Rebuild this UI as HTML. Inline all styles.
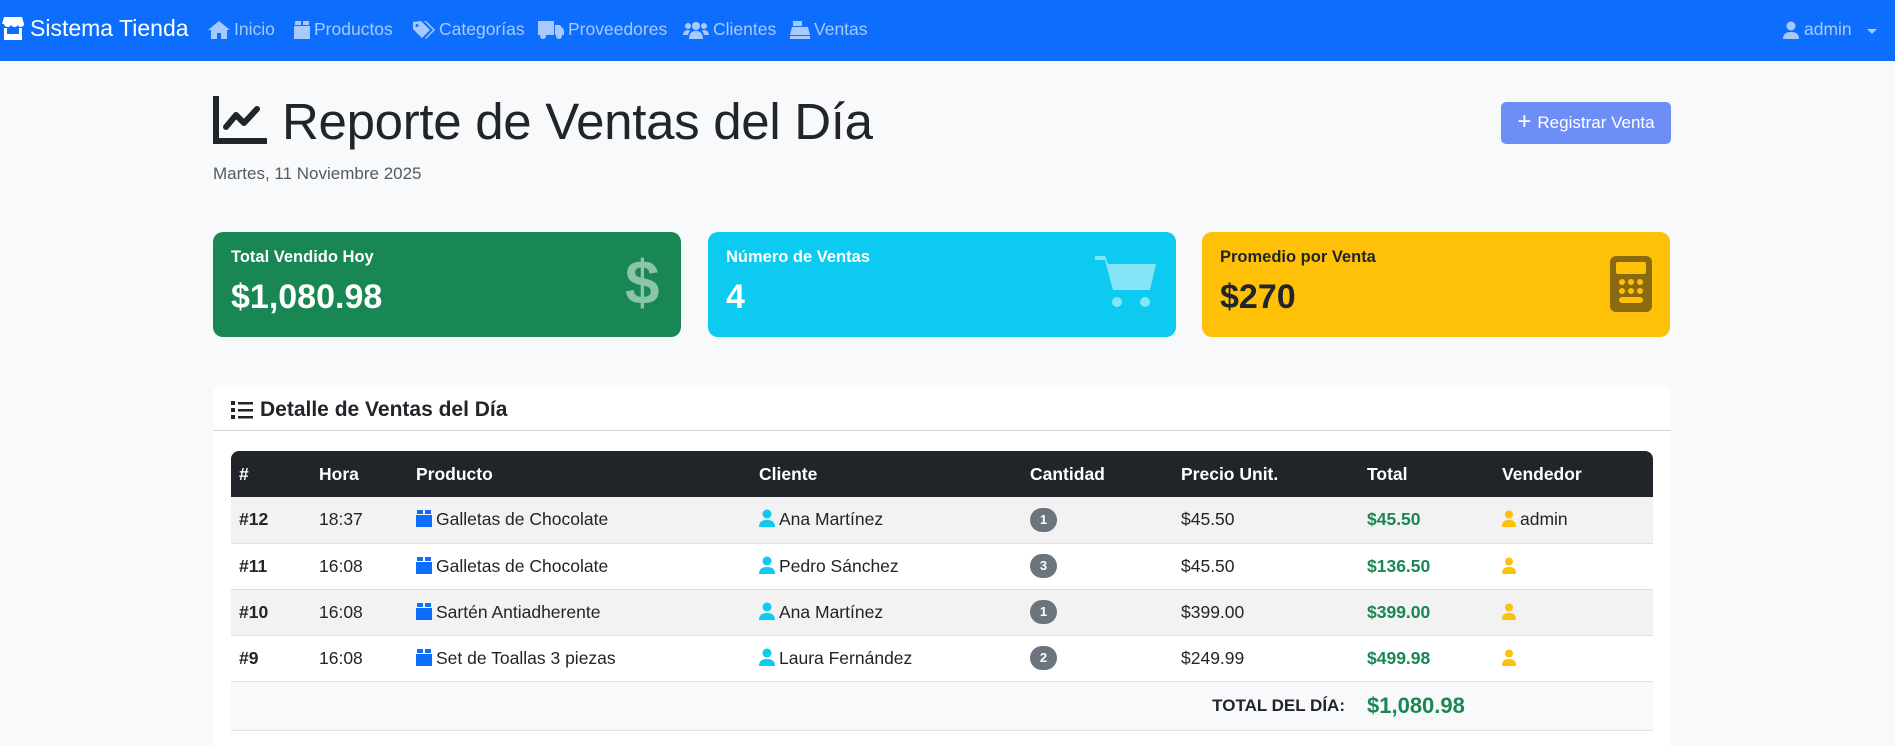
<!DOCTYPE html>
<html><head><meta charset="utf-8">
<style>
*{box-sizing:border-box;margin:0;padding:0}
body{width:1895px;height:746px;overflow:hidden;background:#f8f9fa;font-family:"Liberation Sans",sans-serif;color:#212529;position:relative}
.nav{position:absolute;left:0;top:0;width:1895px;height:61px;background:#0d6efd}
.abs{position:absolute}
.brand{left:30px;top:15px;font-size:23px;color:#fff}
.ni{top:19px;font-size:17.5px;color:#a8c9fe;display:flex;align-items:center;gap:4px}
.ni svg{fill:#a8c9fe}
.title{left:282px;top:92px;font-size:51px;font-weight:300;color:#212529;letter-spacing:-0.3px}
.date{left:213px;top:164px;font-size:17px;color:#555b61}
.btn{left:1501px;top:102px;width:170px;height:42px;background:#6e8ef7;border-radius:5px;color:#fff;font-size:17px;display:flex;align-items:center;justify-content:center;gap:6px}
.card{top:232px;height:105px;width:468px;border-radius:10px}
.card .t{position:absolute;left:18px;top:16px;font-size:16.5px;font-weight:bold}
.card .v{position:absolute;left:18px;top:46px;font-size:34px;font-weight:bold}
.card svg{position:absolute}
.panel{left:213px;top:387px;width:1458px;height:359px;background:#fff;border-radius:6px 6px 0 0}
.ph{position:absolute;left:0;top:0;width:100%;height:44px;border-bottom:1px solid #d3d6d9;font-size:21px;font-weight:bold;padding:11px 0 0 47px}
table{position:absolute;left:231px;top:451px;width:1422px;border-collapse:collapse;font-size:17.5px}
th{background:#212529;color:#fff;height:46px;text-align:left;font-weight:bold;padding:0 0 0 8px}
th:first-child{border-top-left-radius:8px}th:last-child{border-top-right-radius:8px}
td{height:46px;border-bottom:1px solid #dee2e6;padding:0 0 0 8px;vertical-align:middle}
tbody tr:nth-child(odd) td{background:#f2f2f2}
tfoot td{background:#f8f9fa;height:49px}
.g{color:#198754;font-weight:bold}
.b{display:inline-block;width:27px;height:24px;border-radius:12px;background:#6c757d;color:#fff;font-size:13px;font-weight:bold;text-align:center;line-height:24px}
.ic{vertical-align:-2px;margin-right:4px}
</style></head><body>
<div class="nav"></div>
<svg class="abs" style="left:2px;top:16px" width="22" height="26" viewBox="0 0 22 26"><path d="M2 1h18l2 7c0 2-2 3-3.5 3S16 10 16 8c0 2-2 3-3.5 3S9 10 9 8c0 2-1.5 3-3 3S2 10 2 8L0 8z" fill="#fff"/><path d="M2 12h3v6h12v-6h3v12H2z" fill="#fff"/></svg>
<div class="abs brand">Sistema Tienda</div>
<div class="abs ni" style="left:208px"><svg width="22" height="18" viewBox="0 0 22 18"><path d="M11 0L0 9h3v9h6v-6h4v6h6V9h3z"/></svg>Inicio</div>
<div class="abs ni" style="left:294px"><svg width="16" height="18" viewBox="0 0 16 18"><path d="M0 5h16v13H0zM1 0h6v4H1zM9 0h6v4H9z"/></svg>Productos</div>
<div class="abs ni" style="left:413px"><svg width="22" height="18" viewBox="0 0 22 18"><path d="M0 1v7l9 9 8-8-9-9zM4 3a1.5 1.5 0 110 3 1.5 1.5 0 010-3zM11 0l9 9-8 8 1 1 9-9-9-9z"/></svg>Categorías</div>
<div class="abs ni" style="left:538px"><svg width="26" height="18" viewBox="0 0 26 18"><path d="M0 0h16v14H0zM17 4h5l4 5v5h-9z"/><circle cx="5" cy="15" r="3"/><circle cx="21" cy="15" r="3"/></svg>Proveedores</div>
<div class="abs ni" style="left:683px"><svg width="26" height="18" viewBox="0 0 26 18"><circle cx="13" cy="5" r="4"/><circle cx="5" cy="5" r="3"/><circle cx="21" cy="5" r="3"/><path d="M6 18c0-6 3-8 7-8s7 2 7 8zM0 14c0-3 2-5 5-5 1 0 2 1 2 1-1 1-2 3-2 4zM26 14c0-3-2-5-5-5-1 0-2 1-2 1 1 1 2 3 2 4z"/></svg>Clientes</div>
<div class="abs ni" style="left:790px"><svg width="20" height="18" viewBox="0 0 20 18"><path d="M3 0h9v5H3zM2 6h16l2 8H0zM0 15h20v3H0z"/></svg>Ventas</div>
<div class="abs ni" style="left:1782px"><svg width="18" height="18" viewBox="0 0 18 18"><circle cx="9" cy="5" r="4.5"/><path d="M1 18c0-5 3-7 8-7s8 2 8 7z"/></svg>admin<svg width="16" height="18" viewBox="0 0 16 18" style="margin-left:8px"><path d="M3 8h10l-5 5z"/></svg></div>

<svg class="abs" style="left:213px;top:96px" width="54" height="48" viewBox="0 0 54 48"><path d="M3 0v45h50" fill="none" stroke="#212529" stroke-width="6" stroke-linecap="round"/><path d="M13 31l10-12 8 8 13-14" fill="none" stroke="#212529" stroke-width="6" stroke-linejoin="round" stroke-linecap="round"/></svg>
<div class="abs title">Reporte de Ventas del Día</div>
<div class="abs date">Martes, 11 Noviembre 2025</div>
<div class="abs btn"><span style="font-size:24px;line-height:1;margin-top:-3px">+</span>Registrar Venta</div>

<div class="abs card" style="left:213px;background:#198754;color:#fff"><div class="t">Total Vendido Hoy</div><div class="v">$1,080.98</div>
<div style="position:absolute;left:412px;top:16px;font-size:62px;font-weight:bold;color:#8cc4a9">$</div></div>
<div class="abs card" style="left:708px;background:#0dcaf0;color:#fff"><div class="t">Número de Ventas</div><div class="v">4</div>
<svg style="left:387px;top:22px" width="62" height="56" viewBox="0 0 62 56"><path d="M0 2h10l3 8h48l-6 26H18L10 6H0z" fill="#86e4f7"/><circle cx="22" cy="48" r="5" fill="#86e4f7"/><circle cx="50" cy="48" r="5" fill="#86e4f7"/></svg></div>
<div class="abs card" style="left:1202px;background:#ffc107;color:#212529"><div class="t">Promedio por Venta</div><div class="v">$270</div>
<svg style="left:408px;top:24px" width="42" height="56" viewBox="0 0 42 56"><rect width="42" height="56" rx="6" fill="#8a6a0e"/><rect x="6" y="6" width="30" height="12" rx="2" fill="#ffc107"/><g fill="#ffc107"><circle cx="12" cy="26" r="3"/><circle cx="21" cy="26" r="3"/><circle cx="30" cy="26" r="3"/><circle cx="12" cy="35" r="3"/><circle cx="21" cy="35" r="3"/><circle cx="30" cy="35" r="3"/><rect x="9" y="41" width="24" height="6" rx="3"/></g></svg></div>

<div class="abs panel"><div class="ph">Detalle de Ventas del Día</div></div>
<svg class="abs" style="left:231px;top:400px" width="22" height="20" viewBox="0 0 22 20"><g fill="#212529"><rect x="0" y="1" width="4" height="4"/><rect x="0" y="8" width="4" height="4"/><rect x="0" y="15" width="4" height="4"/><rect x="7" y="2" width="15" height="2.5"/><rect x="7" y="9" width="15" height="2.5"/><rect x="7" y="16" width="15" height="2.5"/></g></svg>

<table>
<colgroup><col style="width:80px"><col style="width:97px"><col style="width:343px"><col style="width:271px"><col style="width:151px"><col style="width:186px"><col style="width:135px"><col></colgroup>
<thead><tr><th>#</th><th>Hora</th><th>Producto</th><th>Cliente</th><th>Cantidad</th><th>Precio Unit.</th><th>Total</th><th>Vendedor</th></tr></thead>
<tbody>
<tr><td><b>#12</b></td><td>18:37</td><td><svg class="ic" width="16" height="17" viewBox="0 0 16 17"><path d="M0 5h16v12H0zM1 0h6v4H1zM9 0h6v4H9z" fill="#0d6efd"/></svg>Galletas de Chocolate</td><td><svg class="ic" width="16" height="18" viewBox="0 0 16 18"><circle cx="8" cy="5" r="4.5" fill="#0dcaf0"/><path d="M0 18c0-5 3-7 8-7s8 2 8 7z" fill="#0dcaf0"/></svg>Ana Martínez</td><td><span class="b">1</span></td><td>$45.50</td><td class="g">$45.50</td><td><svg class="ic" width="14" height="17" viewBox="0 0 14 17"><circle cx="7" cy="4.5" r="4" fill="#ffc107"/><path d="M0 17c0-5 2-7 7-7s7 2 7 7z" fill="#ffc107"/></svg>admin</td></tr>
<tr><td><b>#11</b></td><td>16:08</td><td><svg class="ic" width="16" height="17" viewBox="0 0 16 17"><path d="M0 5h16v12H0zM1 0h6v4H1zM9 0h6v4H9z" fill="#0d6efd"/></svg>Galletas de Chocolate</td><td><svg class="ic" width="16" height="18" viewBox="0 0 16 18"><circle cx="8" cy="5" r="4.5" fill="#0dcaf0"/><path d="M0 18c0-5 3-7 8-7s8 2 8 7z" fill="#0dcaf0"/></svg>Pedro Sánchez</td><td><span class="b">3</span></td><td>$45.50</td><td class="g">$136.50</td><td><svg class="ic" width="14" height="17" viewBox="0 0 14 17"><circle cx="7" cy="4.5" r="4" fill="#ffc107"/><path d="M0 17c0-5 2-7 7-7s7 2 7 7z" fill="#ffc107"/></svg></td></tr>
<tr><td><b>#10</b></td><td>16:08</td><td><svg class="ic" width="16" height="17" viewBox="0 0 16 17"><path d="M0 5h16v12H0zM1 0h6v4H1zM9 0h6v4H9z" fill="#0d6efd"/></svg>Sartén Antiadherente</td><td><svg class="ic" width="16" height="18" viewBox="0 0 16 18"><circle cx="8" cy="5" r="4.5" fill="#0dcaf0"/><path d="M0 18c0-5 3-7 8-7s8 2 8 7z" fill="#0dcaf0"/></svg>Ana Martínez</td><td><span class="b">1</span></td><td>$399.00</td><td class="g">$399.00</td><td><svg class="ic" width="14" height="17" viewBox="0 0 14 17"><circle cx="7" cy="4.5" r="4" fill="#ffc107"/><path d="M0 17c0-5 2-7 7-7s7 2 7 7z" fill="#ffc107"/></svg></td></tr>
<tr><td><b>#9</b></td><td>16:08</td><td><svg class="ic" width="16" height="17" viewBox="0 0 16 17"><path d="M0 5h16v12H0zM1 0h6v4H1zM9 0h6v4H9z" fill="#0d6efd"/></svg>Set de Toallas 3 piezas</td><td><svg class="ic" width="16" height="18" viewBox="0 0 16 18"><circle cx="8" cy="5" r="4.5" fill="#0dcaf0"/><path d="M0 18c0-5 3-7 8-7s8 2 8 7z" fill="#0dcaf0"/></svg>Laura Fernández</td><td><span class="b">2</span></td><td>$249.99</td><td class="g">$499.98</td><td><svg class="ic" width="14" height="17" viewBox="0 0 14 17"><circle cx="7" cy="4.5" r="4" fill="#ffc107"/><path d="M0 17c0-5 2-7 7-7s7 2 7 7z" fill="#ffc107"/></svg></td></tr>
</tbody>
<tfoot><tr><td colspan="6" style="text-align:right;padding-right:14px;font-weight:bold;font-size:17px">TOTAL DEL DÍA:</td><td colspan="2" class="g" style="font-size:22px">$1,080.98</td></tr></tfoot>
</table>
</body></html>
